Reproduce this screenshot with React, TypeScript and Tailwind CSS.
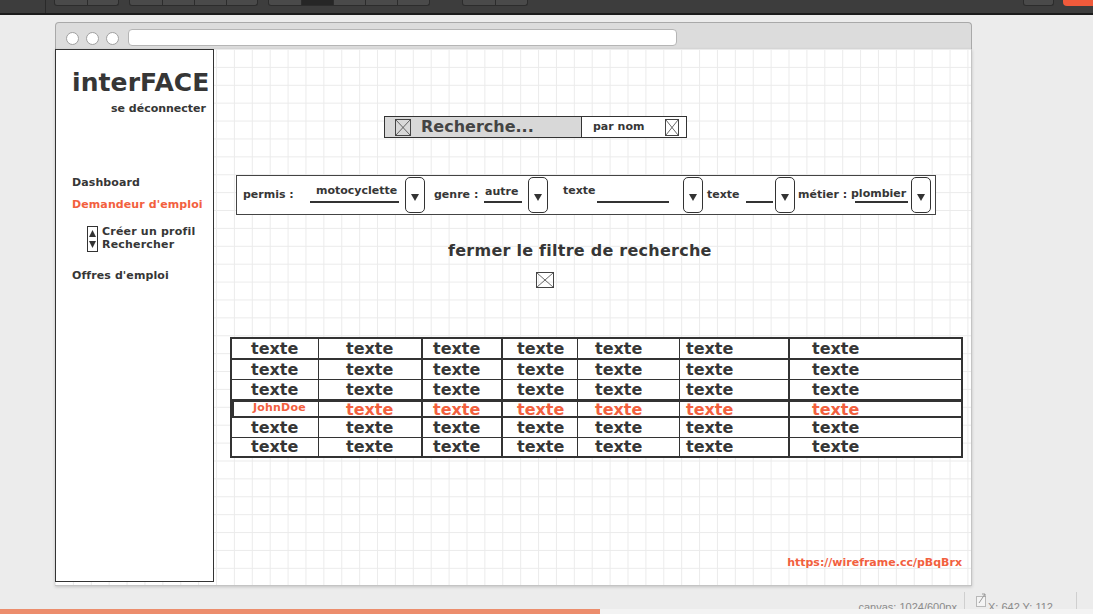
const ORANGE = 'text-[#f2603e]';

const XBox = ({ w, h }: { w: number; h: number }) => (
  <svg width={w} height={h} viewBox={`0 0 ${w} ${h}`} className="block shrink-0">
    <rect x="0.5" y="0.5" width={w - 1} height={h - 1} fill="none" stroke="#444" />
    <path d={`M1 1L${w - 1} ${h - 1}M${w - 1} 1L1 ${h - 1}`} stroke="#444" strokeWidth="0.8" />
  </svg>
);

const Drop = ({ ml }: { ml: string }) => (
  <div className={`${ml} w-[20px] h-[36px] shrink-0 border border-[#333] rounded-[5px] bg-white flex items-center justify-center`}>
    <svg width="8" height="8" viewBox="0 0 8 8" className="mt-[3px]">
      <path d="M0 1H8L4 8Z" fill="#333" />
    </svg>
  </div>
);

const Field = ({ cls, text, pt, bar }: { cls: string; text?: string; pt: string; bar: string }) => (
  <div className={`${cls} self-start h-[27px] flex flex-col shrink-0`}>
    <div className={`${pt} text-[11px] leading-[14px] whitespace-nowrap`}>{text}</div>
    <div className={`${bar} mt-auto h-[2px] bg-[#333]`} />
  </div>
);

const Spinner = () => (
  <svg width="11" height="26" viewBox="0 0 11 26" className="block shrink-0 mt-[1px]">
    <rect x="0.5" y="0.5" width="10" height="25" fill="white" stroke="#333" />
    <path d="M2 11H9L5.5 4Z" fill="#333" />
    <path d="M2 15H9L5.5 22Z" fill="#333" />
  </svg>
);

const cols = [
  'w-[86px] pl-[19px]',
  'w-[103px] pl-[27px] border-l',
  'w-[80px] pl-[10px] border-l-2',
  'w-[76px] pl-[14px] border-l-2',
  'w-[102px] pl-[17px] border-l',
  'w-[109px] pl-[6px] border-l',
  'w-[173px] pl-[22px] border-l-2',
];

const rows = [
  'h-[21px] border-b-2',
  'h-[20px] border-b',
  'h-[19px]',
  'hl',
  'h-[20px] border-b',
  'h-[18px]',
];

const Table = () => (
  <div className="ml-[16px] mt-[49px] w-[733px] border-2 border-[#333] bg-white">
    {rows.map((r, i) =>
      r === 'hl' ? (
        <div key={i} className="h-[19px] border-t-[3px] border-b-2 border-[#333] flex">
          {cols.map((c, j) => (
            <div key={j} className={`${c} ${j === 0 ? 'border-l-2 pl-[17px]' : ''} border-[#333] h-full flex items-center`}>
              {j === 0 ? (
                <span className={`${ORANGE} text-[11px] leading-[11px] mb-[4px] tracking-[0.2px]`}>JohnDoe</span>
              ) : (
                <span className={`${ORANGE} text-[16px] leading-[14px] mt-[1px]`}>texte</span>
              )}
            </div>
          ))}
        </div>
      ) : (
        <div key={i} className={`${r} border-[#333] flex`}>
          {cols.map((c, j) => (
            <div key={j} className={`${c} border-[#333] h-full flex items-center`}>
              <span className="text-[16px] leading-[16px]">texte</span>
            </div>
          ))}
        </div>
      )
    )}
  </div>
);

const Toolbar = () => (
  <div className="h-[15px] bg-[#3d3d3d] border-b-2 border-[#1b1b1b] flex items-start shrink-0">
    <div className="ml-[45px] w-px h-[13px] bg-[#2a2a2a]" />
    <div className="ml-[8px] flex h-[6px] rounded-b-[3px] overflow-hidden border border-t-0 border-[#2c2c2c] bg-[#4a4a4a]">
      <div className="w-[32px]" />
      <div className="w-[31px] border-l border-[#2c2c2c]" />
    </div>
    <div className="ml-[10px] flex h-[6px] rounded-b-[3px] overflow-hidden border border-t-0 border-[#2c2c2c] bg-[#4a4a4a]">
      <div className="w-[32px]" />
      <div className="w-[32px] border-l border-[#2c2c2c]" />
      <div className="w-[32px] border-l border-[#2c2c2c]" />
      <div className="w-[31px] border-l border-[#2c2c2c]" />
    </div>
    <div className="ml-[10px] flex h-[6px] rounded-b-[3px] overflow-hidden border border-t-0 border-[#2c2c2c] bg-[#4a4a4a]">
      <div className="w-[32px]" />
      <div className="w-[32px] border-l border-[#2c2c2c] bg-[#262626]" />
      <div className="w-[32px] border-l border-[#2c2c2c]" />
      <div className="w-[32px] border-l border-[#2c2c2c]" />
      <div className="w-[32px] border-l border-[#2c2c2c]" />
    </div>
    <div className="ml-[32px] flex h-[6px] rounded-b-[3px] overflow-hidden border border-t-0 border-[#2c2c2c] bg-[#4a4a4a]">
      <div className="w-[32px]" />
      <div className="w-[32px] border-l border-[#2c2c2c]" />
    </div>
    <div className="ml-[495px] w-[31px] h-[6px] rounded-b-[3px] border border-t-0 border-[#2c2c2c] bg-[#4a4a4a]" />
    <div className="ml-[9px] flex-1 h-[6px] rounded-bl-[4px] bg-[#f05a3b]" />
  </div>
);

export default function App() {
  return (
    <div className="w-[1093px] h-[614px] overflow-hidden bg-[#ececec] flex flex-col font-['DejaVu_Sans',sans-serif] font-bold text-[#363636]">
      <Toolbar />
      <div className="flex-1 pl-[55px] pt-[7px]">
        <div className="w-[917px]">
          <div className="h-[27px] bg-[#dcdcdc] border border-b-0 border-[#a9a9a9] rounded-t-[4px] flex items-start pt-[6px] pl-[10px]">
            <div className="mt-[3px] flex gap-[7px]">
              <div className="w-[13px] h-[13px] rounded-full bg-white border border-[#a0a0a0]" />
              <div className="w-[13px] h-[13px] rounded-full bg-white border border-[#a0a0a0]" />
              <div className="w-[13px] h-[13px] rounded-full bg-white border border-[#a0a0a0]" />
            </div>
            <div className="ml-[9px] w-[549px] h-[17px] bg-white rounded-[4px] border border-[#b5b5b5]" />
          </div>
          <div className="h-[537px] flex bg-white bg-[linear-gradient(to_right,#ebebeb_1px,transparent_1px),linear-gradient(to_bottom,#ebebeb_1px,transparent_1px)] bg-[size:17.9px_17.9px] border-r border-b border-[#c4c4c4] shadow-[0_1px_3px_rgba(0,0,0,0.18)]">
            <aside className="w-[159px] h-[533px] shrink-0 border border-[#333] bg-white flex flex-col">
              <div className="mt-[20px] pl-[16px] text-[25px] leading-none tracking-[0.1px]">interFACE</div>
              <div className="mt-[7px] pr-[7px] text-right text-[11px] leading-[14px]">se déconnecter</div>
              <div className="mt-[60px] pl-[16px] text-[11px] leading-[14px] tracking-[0.1px]">Dashboard</div>
              <div className={`mt-[8px] pl-[16px] text-[11px] leading-[14px] tracking-[0.1px] ${ORANGE}`}>Demandeur d'emploi</div>
              <div className="mt-[13px] pl-[31px] flex items-start">
                <Spinner />
                <div className="ml-[4px] text-[11px] leading-[13px] tracking-[0.2px]">
                  <div>Créer un profil</div>
                  <div>Rechercher</div>
                </div>
              </div>
              <div className="mt-[17px] pl-[16px] text-[11px] leading-[14px] tracking-[0.1px]">Offres d'emploi</div>
            </aside>
            <main className="flex-1 flex flex-col items-start">
              <div className="ml-[170px] mt-[67px] w-[303px] h-[22px] border border-[#333] flex bg-white">
                <div className="w-[197px] h-full bg-[#d8d8d8] border-r border-[#333] flex items-center pl-[10px]">
                  <XBox w={16} h={17} />
                  <span className="ml-[10px] text-[16px] leading-[18px] text-[#444]">Recherche...</span>
                </div>
                <div className="flex-1 flex items-center justify-between pl-[11px] pr-[7px]">
                  <span className="text-[11px] leading-[14px]">par nom</span>
                  <XBox w={14} h={17} />
                </div>
              </div>

              <div className="ml-[22px] mt-[37px] w-[700px] h-[40px] border border-[#444] bg-white flex items-center">
                <span className="ml-[6px] w-[52px] shrink-0 text-[11px] leading-[14px] whitespace-nowrap">permis :</span>
                <Field cls="ml-[15px] w-[89px]" text="motocyclette" pt="pt-[8px] pl-[6px]" bar="" />
                <Drop ml="ml-[6px]" />
                <span className="ml-[9px] w-[45px] shrink-0 text-[11px] leading-[14px] whitespace-nowrap">genre :</span>
                <Field cls="ml-[5px] w-[38px]" text="autre" pt="pt-[9px] pl-[1px]" bar="" />
                <Drop ml="ml-[6px]" />
                <span className="ml-[15px] w-[34px] shrink-0 self-start mt-[8px] text-[11px] leading-[14px]">texte</span>
                <Field cls="w-[72px]" pt="" bar="" />
                <Drop ml="ml-[14px]" />
                <span className="ml-[4px] w-[34px] shrink-0 text-[11px] leading-[14px]">texte</span>
                <Field cls="ml-[5px] w-[27px]" pt="" bar="" />
                <Drop ml="ml-[2px]" />
                <span className="ml-[3px] w-[50px] shrink-0 text-[11px] leading-[14px] whitespace-nowrap">métier :</span>
                <Field cls="ml-[3px] w-[57px]" text="plombier" pt="pt-[11px]" bar="ml-[4px]" />
                <Drop ml="ml-[3px]" />
              </div>

              <div className="ml-[234px] mt-[26px] text-[16px] leading-[20px] tracking-[0.25px] whitespace-nowrap">fermer le filtre de recherche</div>
              <div className="ml-[322px] mt-[11px]">
                <XBox w={18} h={16} />
              </div>

              <Table />

              <div className={`self-end mr-[9px] mt-[98px] text-[11px] leading-[14px] ${ORANGE}`}>https://wireframe.cc/pBqBrx</div>
            </main>
          </div>
        </div>
      </div>
      <div className="h-[19px] shrink-0 overflow-hidden flex justify-end items-start pr-[16px] font-['Liberation_Sans',sans-serif] font-normal text-[11px] text-[#8a8a8a]">
        <span className="mt-[10px] leading-[14px]">canvas: 1024/600px</span>
        <div className="ml-[7px] mt-[2px] w-px h-[17px] bg-[#cfcfcf]" />
        <svg width="11" height="14" viewBox="0 0 11 14" className="ml-[11px] mt-[3px] shrink-0">
          <rect x="0.5" y="3.5" width="9" height="10" fill="#f4f4f4" stroke="#b8b8b8" />
          <path d="M3 10L9 1M6 1H9V4" stroke="#9a9a9a" fill="none" />
        </svg>
        <span className="ml-[1px] mt-[10px] leading-[14px]">X: 642 Y: 112</span>
        <div className="ml-[23px] mt-[2px] w-px h-[17px] bg-[#cfcfcf]" />
      </div>
      <div className="h-[5px] shrink-0 bg-[#f3f3f3]">
        <div className="w-[600px] h-full bg-[#ec8d6d]" />
      </div>
    </div>
  );
}
